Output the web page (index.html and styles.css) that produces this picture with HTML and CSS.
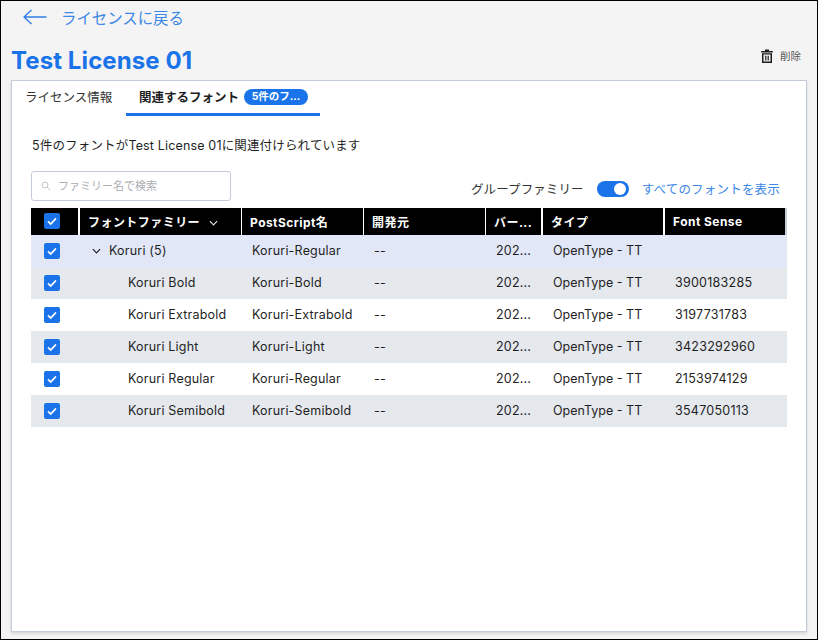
FILE: index.html
```html
<!DOCTYPE html>
<html lang="ja">
<head>
    <meta charset="UTF-8">
    <meta name="viewport" content="width=device-width, initial-scale=1.0">
    <title>Test License 01</title>
    <link rel="stylesheet" href="styles.css">
</head>
<body>
    <div id="window">
        <a class="back-link" href="#">
            <svg class="back-arrow" width="24" height="16" viewBox="0 0 24 16"><path d="M23.5 8H1M8.5 1L1 8l7.500 7" fill="none" stroke="#2f7fe6" stroke-width="1.300"/></svg>
            <span>ライセンスに戻る</span>
        </a>
        <div class="title-row">
            <h1>Test License 01</h1>
            <button class="delete-button">
                <svg width="12" height="14" viewBox="0 0 12 14"><path d="M4 .5h4v1.500h3.800v1.500H.2V2H4zM1 4.300h10V14H1zM2.500 5.600v7h7v-7zM4.200 6.800h1.200v4.700H4.200zM6.600 6.800h1.200v4.700H6.600z" fill="#1c1c1c" fill-rule="evenodd"/></svg>
                <span>削除</span>
            </button>
        </div>
        <div id="panel">
            <div class="tabs">
                <div class="tab">ライセンス情報</div>
                <div class="tab active">関連するフォント<span class="badge">5件のフ...</span></div>
            </div>
            <p class="summary">5件のフォントがTest License 01に関連付けられています</p>
            <div class="toolbar">
                <div class="search">
                    <svg width="10" height="10" viewBox="0 0 10 10"><circle cx="4" cy="4" r="3" fill="none" stroke="#c2c6cc"/><path d="M6.200 6.200L9.500 9.500" stroke="#c2c6cc"/></svg>
                    <span>ファミリー名で検索</span>
                </div>
                <div class="toolbar-right">
                    <span>グループファミリー</span>
                    <div class="toggle"><div class="knob"></div></div>
                    <a class="show-all" href="#">すべてのフォントを表示</a>
                </div>
            </div>
            <table id="fonts">
                <colgroup>
                    <col class="col-check">
                    <col class="col-family">
                    <col class="col-wide">
                    <col class="col-wide">
                    <col class="col-version">
                    <col class="col-wide">
                    <col class="col-wide">
                </colgroup>
                <thead>
                    <tr>
                        <th class="sep-2"><span class="check"><svg width="16" height="16" viewBox="0 0 16 16"><path d="M4 8.300l2.700 2.700L12 5.300" fill="none" stroke="#fff" stroke-width="1.700"/></svg></span></th>
                        <th>フォントファミリー<svg class="sort" width="9" height="6" viewBox="0 0 10 6"><path d="M1 1l4 4 4-4" fill="none" stroke="#dfe2e6" stroke-width="1.300"/></svg></th>
                        <th>PostScript名</th>
                        <th>開発元</th>
                        <th class="sep-2">バー...</th>
                        <th class="sep-2">タイプ</th>
                        <th class="sep-end">Font Sense</th>
                    </tr>
                </thead>
                <tbody>
                    <tr class="group">
                        <td><span class="check"><svg width="16" height="16" viewBox="0 0 16 16"><path d="M4 8.300l2.700 2.700L12 5.300" fill="none" stroke="#fff" stroke-width="1.700"/></svg></span></td>
                        <td class="family-name"><svg class="expand" width="9" height="6" viewBox="0 0 10 6"><path d="M1 1l4 4 4-4" fill="none" stroke="#222" stroke-width="1.300"/></svg>Koruri (5)</td>
                        <td>Koruri-Regular</td>
                        <td>--</td>
                        <td>202...</td>
                        <td class="type">OpenType - TT</td>
                        <td></td>
                    </tr>
                    <tr class="shaded">
                        <td><span class="check"><svg width="16" height="16" viewBox="0 0 16 16"><path d="M4 8.300l2.700 2.700L12 5.300" fill="none" stroke="#fff" stroke-width="1.700"/></svg></span></td>
                        <td class="member-name">Koruri Bold</td>
                        <td>Koruri-Bold</td>
                        <td>--</td>
                        <td>202...</td>
                        <td class="type">OpenType - TT</td>
                        <td class="sense">3900183285</td>
                    </tr>
                    <tr>
                        <td><span class="check"><svg width="16" height="16" viewBox="0 0 16 16"><path d="M4 8.300l2.700 2.700L12 5.300" fill="none" stroke="#fff" stroke-width="1.700"/></svg></span></td>
                        <td class="member-name">Koruri Extrabold</td>
                        <td>Koruri-Extrabold</td>
                        <td>--</td>
                        <td>202...</td>
                        <td class="type">OpenType - TT</td>
                        <td class="sense">3197731783</td>
                    </tr>
                    <tr class="shaded">
                        <td><span class="check"><svg width="16" height="16" viewBox="0 0 16 16"><path d="M4 8.300l2.700 2.700L12 5.300" fill="none" stroke="#fff" stroke-width="1.700"/></svg></span></td>
                        <td class="member-name">Koruri Light</td>
                        <td>Koruri-Light</td>
                        <td>--</td>
                        <td>202...</td>
                        <td class="type">OpenType - TT</td>
                        <td class="sense">3423292960</td>
                    </tr>
                    <tr>
                        <td><span class="check"><svg width="16" height="16" viewBox="0 0 16 16"><path d="M4 8.300l2.700 2.700L12 5.300" fill="none" stroke="#fff" stroke-width="1.700"/></svg></span></td>
                        <td class="member-name">Koruri Regular</td>
                        <td>Koruri-Regular</td>
                        <td>--</td>
                        <td>202...</td>
                        <td class="type">OpenType - TT</td>
                        <td class="sense">2153974129</td>
                    </tr>
                    <tr class="shaded">
                        <td><span class="check"><svg width="16" height="16" viewBox="0 0 16 16"><path d="M4 8.300l2.700 2.700L12 5.300" fill="none" stroke="#fff" stroke-width="1.700"/></svg></span></td>
                        <td class="member-name">Koruri Semibold</td>
                        <td>Koruri-Semibold</td>
                        <td>--</td>
                        <td>202...</td>
                        <td class="type">OpenType - TT</td>
                        <td class="sense">3547050113</td>
                    </tr>
                </tbody>
            </table>
        </div>
    </div>
</body>
</html>
```

FILE: styles.css
```css
* {
    box-sizing: border-box;
}
body {
    margin: 0;
    font-family: Inter, "Noto Sans CJK JP", sans-serif;
    font-size: 12.5px;
    color: #1f1f1f;
}
#window {
    width: 818px;
    height: 640px;
    border: 1px solid #000;
    background: #f4f4f4;
    display: flex;
    flex-direction: column;
    padding: 0 10px 7px 10px;
}
.back-link {
    display: flex;
    align-items: center;
    gap: 14px;
    height: 32px;
    padding-left: 12px;
    color: #3d87e6;
    font-size: 15.4px;
    text-decoration: none;
}
.title-row {
    display: flex;
    justify-content: space-between;
    align-items: center;
    height: 47px;
    padding-top: 8px;
}
h1 {
    margin: 0;
    color: #1a73e8;
    font-size: 24px;
    font-weight: 700;
    letter-spacing: 0.1px;
    line-height: 38px;
}
.delete-button {
    display: flex;
    align-items: center;
    gap: 7px;
    margin: -10px 6px 0 0;
    padding: 0;
    border: none;
    background: none;
    color: #555;
    font-family: inherit;
    font-size: 10.5px;
}
#panel {
    flex: 1;
    background: #fff;
    border: 1px solid #c5ccd9;
    box-shadow: 0 2px 3px rgba(90, 100, 120, 0.2);
    padding: 0 19px;
}
.tabs {
    display: flex;
    height: 35px;
    margin-left: -6px;
}
.tab {
    padding: 8px 13px 0 0;
    line-height: 18px;
    color: #333;
    width: 101px;
}
.tab.active {
    width: 194px;
    padding-left: 13px;
    padding-right: 0;
    border-bottom: 3px solid #1a73e8;
    font-weight: 700;
    color: #1f1f1f;
}
.badge {
    display: inline-block;
    height: 16px;
    width: 64px;
    margin-left: 5px;
    border-radius: 8px;
    background: #1a73e8;
    color: #fff;
    font-size: 10.5px;
    line-height: 16px;
    text-align: center;
    vertical-align: top;
}
.summary {
    margin: 21px 0 0 1px;
    line-height: 18px;
    letter-spacing: 0.16px;
}
.toolbar {
    display: flex;
    justify-content: space-between;
    align-items: center;
    margin-top: 16px;
    padding-right: 7px;
}
.search {
    display: flex;
    align-items: center;
    gap: 7px;
    width: 200px;
    height: 30px;
    padding-left: 9px;
    border: 1px solid #c5ccd9;
    border-radius: 3px;
    color: #a9adb3;
    font-size: 11px;
    line-height: 26px;
}
.toolbar-right {
    display: flex;
    align-items: center;
    margin-top: 5px;
    color: #333;
    letter-spacing: 0.1px;
}
.toggle {
    width: 32px;
    height: 16px;
    margin: 0 13px;
    padding: 2px 3px;
    border-radius: 8px;
    background: #1a73e8;
    display: flex;
    justify-content: flex-end;
}
.knob {
    width: 12px;
    height: 12px;
    border-radius: 50%;
    background: #fff;
}
.show-all {
    color: #3d87e6;
    text-decoration: none;
    letter-spacing: 0.2px;
}
#fonts {
    width: 756px;
    margin-top: 7px;
    border-collapse: separate;
    border-spacing: 0;
    table-layout: fixed;
}
.col-check {
    width: 49px;
}
.col-family {
    width: 162px;
}
.col-wide {
    width: 122px;
}
.col-version {
    width: 57px;
}
#fonts th {
    height: 27px;
    padding: 0 0 0 8px;
    background: #000;
    border-right: 1px solid #fff;
    color: #fff;
    font-size: 12px;
    font-weight: 700;
    letter-spacing: 0.45px;
    text-align: left;
    white-space: nowrap;
}
#fonts th.sep-2 {
    border-right-width: 2px;
}
#fonts th.sep-end {
    border-right: 2px solid #c5ccd9;
}
#fonts th:first-child {
    padding: 0 0 1px 13px;
}
#fonts td {
    height: 32px;
    padding: 0 0 2px 10px;
    white-space: nowrap;
    letter-spacing: 0.2px;
}
#fonts td:first-child {
    padding: 0 0 0 13px;
}
#fonts td.type {
    letter-spacing: 0;
}
#fonts td.sense {
    letter-spacing: 0.25px;
}
.check {
    display: block;
    width: 16px;
    height: 16px;
    border-radius: 2px;
    background: #1a73e8;
}
.check svg {
    display: block;
}
.group {
    background: #e2e7f8;
}
.shaded {
    background: #e5e8ed;
}
.sort {
    margin-left: 9px;
    vertical-align: 1px;
}
.expand {
    margin-right: 8px;
    vertical-align: 1px;
}
#fonts td.family-name {
    padding-left: 12px;
}
#fonts td.member-name {
    padding-left: 48px;
}
```
